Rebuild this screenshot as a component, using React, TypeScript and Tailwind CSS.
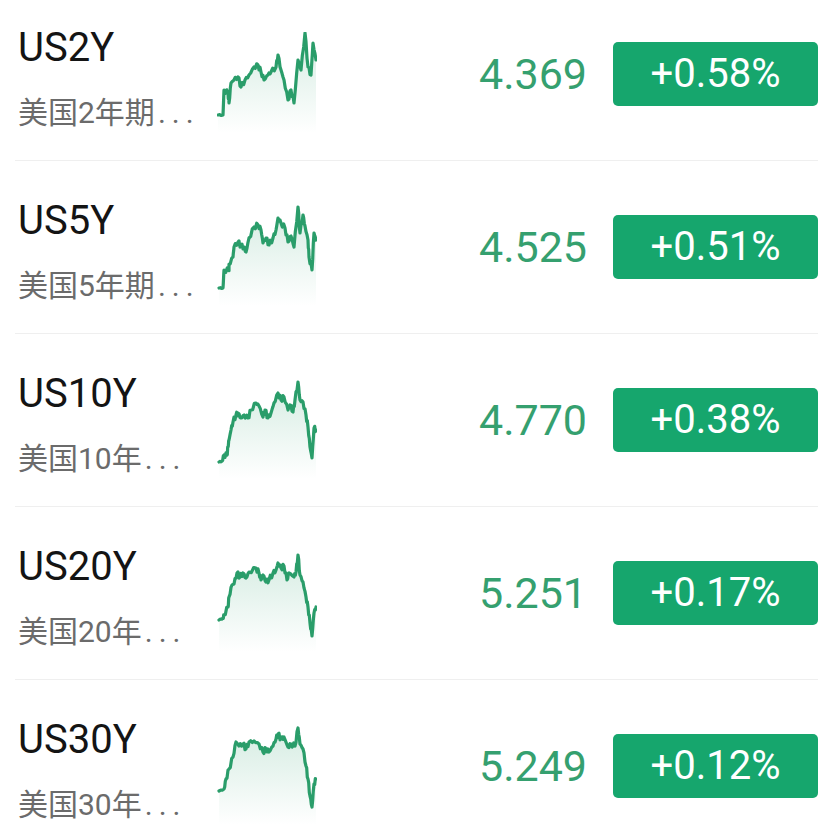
type Pt = [number, number]

interface Bond {
  code: string
  name: string
  value: string
  change: string
  points: Pt[]
}

const bonds: Bond[] = [
  {
    code: "US2Y",
    name: "美国2年期",
    value: "4.369",
    change: "+0.58%",
    points: [[0,82],[5,82],[6,57],[10,60],[11,70],[13,50],[16,47],[20,44],[23,54],[27,47],[31,42],[36,34],[40,32],[43,39],[46,47],[50,42],[53,39],[58,34],[60,22],[63,37],[66,47],[70,67],[73,57],[76,70],[80,27],[83,37],[87,0],[90,34],[93,42],[95,10],[98,27]],
  },
  {
    code: "US5Y",
    name: "美国5年期",
    value: "4.525",
    change: "+0.51%",
    points: [[1,82],[5,82],[6,64],[11,64],[11,59],[15,51],[16,41],[20,36],[23,40],[26,41],[28,46],[31,32],[36,21],[40,19],[43,24],[45,37],[48,32],[51,39],[55,32],[58,24],[60,12],[63,17],[67,22],[70,36],[73,30],[76,41],[80,1],[82,27],[85,9],[87,20],[90,34],[91,51],[94,64],[96,27],[98,34]],
  },
  {
    code: "US10Y",
    name: "美国10年",
    value: "4.770",
    change: "+0.38%",
    points: [[1,83],[4,82],[6,76],[9,76],[10,68],[11,61],[13,51],[15,43],[18,36],[20,34],[23,39],[26,36],[30,39],[33,31],[38,24],[41,27],[45,38],[47,31],[50,39],[53,34],[56,24],[60,14],[63,21],[66,18],[70,31],[72,26],[75,33],[77,21],[80,3],[82,21],[85,23],[88,36],[90,48],[92,68],[94,79],[96,49],[98,51]],
  },
  {
    code: "US20Y",
    name: "美国20年",
    value: "5.251",
    change: "+0.17%",
    points: [[1,68],[5,66],[6,63],[10,55],[11,45],[14,33],[16,32],[19,21],[22,25],[25,21],[28,26],[31,20],[38,16],[41,21],[43,28],[45,23],[48,30],[51,28],[55,21],[58,18],[60,11],[63,16],[66,14],[69,28],[71,21],[76,25],[78,20],[80,3],[82,23],[85,30],[88,45],[90,55],[92,71],[94,84],[96,61],[98,55]],
  },
  {
    code: "US30Y",
    name: "美国30年",
    value: "5.249",
    change: "+0.12%",
    points: [[1,66],[6,64],[8,54],[11,44],[15,32],[18,17],[21,21],[25,19],[28,24],[31,17],[36,16],[41,19],[45,27],[48,24],[51,27],[55,21],[58,14],[60,9],[63,14],[66,12],[70,22],[73,19],[77,21],[80,3],[82,19],[85,24],[88,41],[90,54],[92,71],[94,82],[96,59],[98,54]],
  },
]

// add a bit of wiggle between the hand-picked points so the line looks like tick data
function roughen(points: Pt[]): Pt[] {
  const out: Pt[] = []
  for (let i = 0; i < points.length; i++) {
    out.push(points[i])
    const next = points[i + 1]
    if (!next) continue
    const [x1, y1] = points[i]
    const [x2, y2] = next
    const steps = 2
    for (let s = 1; s <= steps; s++) {
      const t = s / (steps + 1)
      const jitter = Math.sin((i * 7 + s * 13) * 1.7) * 2.5
      out.push([x1 + (x2 - x1) * t, Math.max(0, Math.min(100, y1 + (y2 - y1) * t + jitter))])
    }
  }
  return out
}

function Sparkline({ points, id }: { points: Pt[]; id: string }) {
  const pts = roughen(points)
  const line = pts.map(([x, y], i) => `${i ? "L" : "M"}${x.toFixed(1)} ${y.toFixed(1)}`).join(" ")
  const area = `${line} L${pts[pts.length - 1][0]} 100 L${pts[0][0]} 100 Z`

  return (
    <svg width="100" height="102" viewBox="-1 -1 100 102" className="shrink-0">
      <defs>
        <linearGradient id={id} x1="0" y1="0" x2="0" y2="1">
          <stop offset="0%" stopColor="#2fa06f" stopOpacity="0.2" />
          <stop offset="100%" stopColor="#2fa06f" stopOpacity="0" />
        </linearGradient>
      </defs>
      <path d={area} fill={`url(#${id})`} />
      <path d={line} fill="none" stroke="#2a9d6a" strokeWidth="3.2" strokeLinejoin="round" strokeLinecap="round" />
    </svg>
  )
}

function BondRow({ bond }: { bond: Bond }) {
  return (
    <div className="mx-[15px] mr-[12px] flex h-[173px] items-center border-b border-[#efefef]">
      <div className="flex w-[202px] shrink-0 flex-col pl-[3px] pt-[6px]">
        <div className="text-[40px] leading-[52px] text-[#141414]">{bond.code}</div>
        <div className="mt-[19px] whitespace-nowrap text-[30px] leading-[40px] text-[#6b6b6b]">
          {bond.name}
          <span className="ml-[3px] tracking-[6px]">...</span>
        </div>
      </div>
      <div className="mt-[17px]">
        <Sparkline points={bond.points} id={`g-${bond.code}`} />
      </div>
      <div className="flex-1 pr-[26px] text-right text-[43px] text-[#35a06f]">{bond.value}</div>
      <div className="flex h-[64px] w-[205px] shrink-0 items-center justify-center rounded-[5px] bg-[#16a66d] text-[40px] text-white">
        {bond.change}
      </div>
    </div>
  )
}

export default function App() {
  return (
    <div
      className="h-[839px] w-[830px] overflow-hidden bg-white"
      style={{ fontFamily: 'Roboto, "Noto Sans CJK SC", sans-serif' }}
    >
      <div className="-mt-[12px]">
        {bonds.map((b) => (
          <BondRow key={b.code} bond={b} />
        ))}
      </div>
    </div>
  )
}
